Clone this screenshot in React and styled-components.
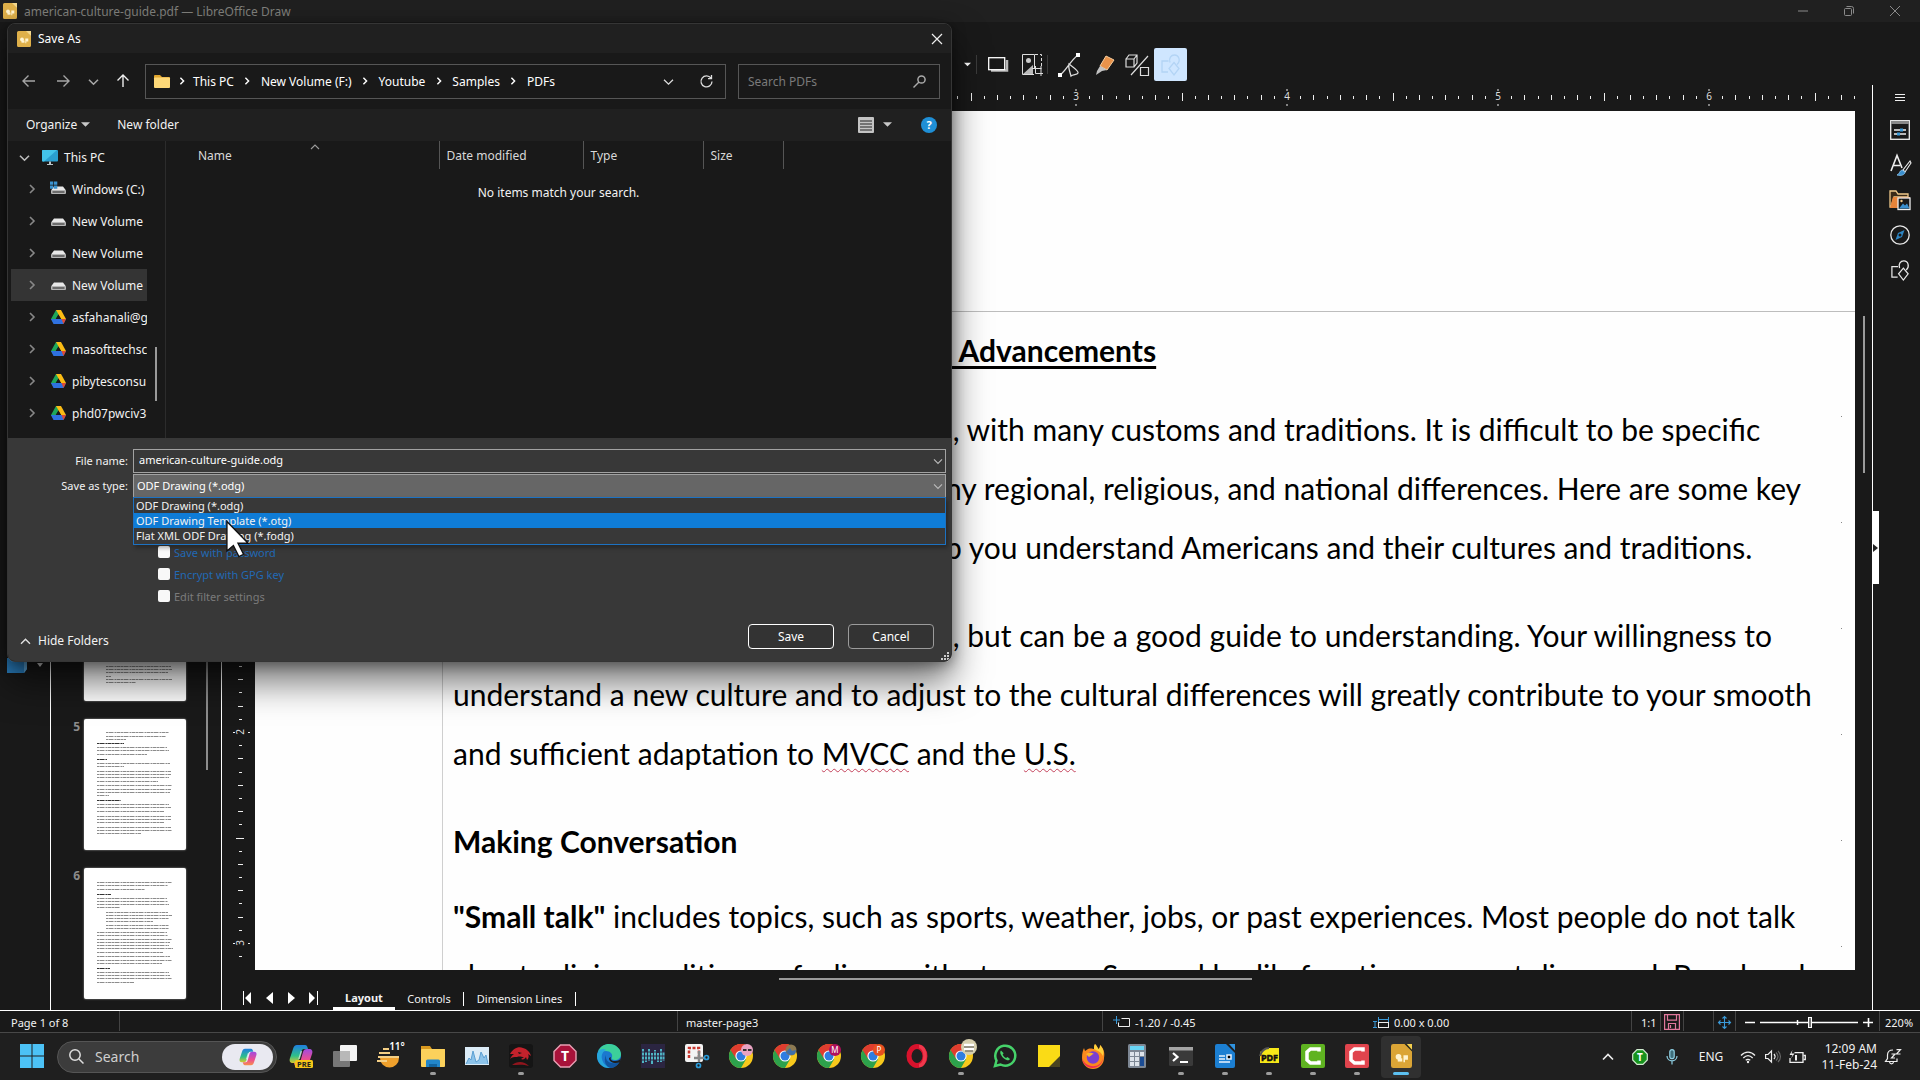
import React from "react";
import styled, { createGlobalStyle, css } from "styled-components";

const Global = createGlobalStyle`
  *, *::before, *::after { box-sizing: border-box; }
  html, body { margin: 0; padding: 0; background: #191919; overflow: hidden; }
  body { font-family: "Noto Sans", "Open Sans", sans-serif; font-size: 12px; color: #f2f2f2; }
  button, input, select { font: inherit; color: inherit; }
  button { background: none; border: 0; padding: 0; margin: 0; cursor: default; }
  svg { display: block; flex: none; overflow: visible; }
  h2, p, ul { margin: 0; padding: 0; font-weight: inherit; }
`;

/* ---------- application window ---------- */

const Desktop = styled.div`
  position: relative;
  display: flex;
  flex-direction: column;
  height: 100vh;
  overflow: hidden;
  background: #191919;
`;

const TitleBar = styled.header`
  display: flex;
  align-items: center;
  gap: 7px;
  height: 22px;
  flex: none;
  padding: 0 17px 0 3px;
  background: #202020;
  color: #7f7f7b;
`;

const WindowButtons = styled.div`
  display: flex;
  gap: 30px;
  margin-left: auto;
`;

const GlyphButton = styled.button`
  display: flex;
  align-items: center;
  justify-content: center;
  width: ${(p) => p.$w || 16}px;
  height: ${(p) => p.$h || 16}px;
  flex: none;
`;

const ToolBar = styled.div`
  display: flex;
  align-items: flex-start;
  height: 63px;
  flex: none;
  padding: 22px 0 0 959px;
`;

const ToolButton = styled.button`
  display: flex;
  align-items: center;
  justify-content: center;
  width: ${(p) => p.$w || 33}px;
  height: 33px;
  margin-top: 4px;
  border-radius: 2px;
  background: ${(p) => (p.$active ? "#cfe6ff" : "transparent")};
`;

const ToolRule = styled.span`
  width: 1px;
  height: 19px;
  margin-top: 11px;
  background: #3c3c3c;
`;

const Workspace = styled.main`
  display: flex;
  flex: 1;
  min-height: 0;
`;

const DrawTools = styled.div`
  display: flex;
  width: 50px;
  flex: none;
  gap: 8px;
  padding: 573px 0 0 7px;
  align-items: flex-start;
`;

const SlidePanel = styled.aside`
  display: flex;
  width: 172px;
  flex: none;
  padding-bottom: 2px;
  border-left: 1px solid #fff;
  border-right: 1px solid #fff;
`;

const SlideList = styled.div`
  display: flex;
  flex-direction: column;
  justify-content: flex-end;
  gap: 18px;
  width: 152px;
  padding: 0 0 9px;
`;

const Slide = styled.div`
  display: flex;
  justify-content: flex-end;
  gap: 4px;
  padding-right: 17px;
  font-weight: 700;
  line-height: 16px;
  color: #8b8b8b;
`;

const SlidePage = styled.div`
  width: 102px;
  height: 131px;
  border-radius: 2px;
  background: #fff;
  box-shadow: 0 0 2px #aaa;
`;

const SlideThumbTrack = styled.div`
  width: 2px;
  height: 185px;
  margin: 500px 0 0 3px;
  background: #8d8d8d;
`;

const Editor = styled.section`
  display: flex;
  flex-direction: column;
  flex: 1;
  min-width: 0;
`;

const EditorRow = styled.div`
  display: flex;
  flex: 1;
  min-height: 0;
`;

const HRuler = styled.svg`
  width: 100%;
  height: 26px;
`;

const VRuler = styled.svg`
  width: 33px;
  height: 100%;
`;

const Page = styled.article`
  flex: 1;
  min-width: 0;
  overflow: hidden;
  background: #fefefe;
  color: #000;
`;

const Frame = styled.div`
  height: 100%;
  margin: 200px 0 0 187px;
  padding: 9px 0 0 10px;
  border-top: 1px solid #bdbdbd;
  border-left: 1px solid #cfcfcf;
  background: linear-gradient(#888 1px, transparent 1px) right 13px top 104px / 1px 106px repeat-y;
  font-family: Lato, Carlito, sans-serif;
  font-size: 30px;
  line-height: 59px;
  white-space: pre;
`;

const Paragraph = styled.p`
  margin-bottom: ${(p) => p.$after || 0}px;
`;

const Line = styled.span`
  display: block;
  padding-left: ${(p) => (p.$covered ? 492 : 0)}px;
`;

const Heading = styled.h2`
  && {
    padding-left: ${(p) => (p.$covered ? 492 : 0)}px;
    margin-bottom: ${(p) => p.$after}px;
    font-size: 30px;
    font-weight: 700;
  }
`;

const Title = styled.span`
  text-decoration: underline;
  text-decoration-thickness: 3px;
  text-underline-offset: 4px;
  text-decoration-skip-ink: none;
`;

const Misspelt = styled.span`
  text-decoration: underline wavy #c4415a 1px;
  text-underline-offset: 3px;
`;

const ScrollColumn = styled.div`
  width: 17px;
  flex: none;
  padding: 205px 7px 0 8px;
`;

const ScrollThumb = styled.div`
  width: ${(p) => p.$w};
  height: ${(p) => p.$h};
  background: #9a9a9a;
`;

const SheetBar = styled.div`
  height: 40px;
  flex: none;
  font-size: 11px;
`;

const HScroll = styled.div`
  display: flex;
  height: 16px;
  padding: 8px 0 0 557px;
`;

const Sheets = styled.nav`
  display: flex;
  height: 24px;
  padding-left: 14px;
  align-items: stretch;
`;

const SheetNav = styled(GlyphButton)`
  width: 22px;
  height: 24px;
`;

const Sheet = styled.button`
  padding: 0 ${(p) => (p.$active ? 0 : 12)}px;
  width: ${(p) => p.$w}px;
  border-right: ${(p) => (p.$rule ? "1px solid #fff" : "0")};
  border-bottom: ${(p) => (p.$active ? "3px solid #fff" : "0")};
  font-weight: ${(p) => (p.$active ? 700 : 400)};
  line-height: 23px;
  white-space: nowrap;
  ${(p) => p.$rule && css`
    height: 14px;
    line-height: 14px;
    margin-top: 6px;
  `}
`;

const SideBar = styled.aside`
  display: flex;
  flex-direction: column;
  align-items: center;
  gap: 13px;
  width: 48px;
  flex: none;
  padding: 5px 0 0 7px;
  border-left: 1px solid #fff;
  position: relative;
`;

const SideHandle = styled.button`
  position: absolute;
  left: 0;
  top: 426px;
  width: 6px;
  height: 73px;
  display: flex;
  align-items: center;
  background: #fff;
`;

const StatusBar = styled.footer`
  display: flex;
  height: 22px;
  flex: none;
  border-top: 1px solid #fff;
  font-size: 11px;
  white-space: nowrap;
`;

const StatusCell = styled.div`
  display: flex;
  align-items: center;
  gap: 5px;
  width: ${(p) => (p.$w ? p.$w + "px" : "auto")};
  flex: ${(p) => p.$grow || "none"};
  padding: 2px 0 0 ${(p) => p.$pad || 0}px;
  border-right: ${(p) => (p.$rule ? "1px solid #444" : "0")};
  height: 20px;
`;

/* ---------- taskbar ---------- */

const TaskBar = styled.footer`
  display: flex;
  align-items: center;
  height: 48px;
  flex: none;
  padding: 0 18px 0 12px;
  border-top: 1px solid #484848;
  background: #1f1f1f;
`;

const Task = styled.button`
  display: flex;
  flex-direction: column;
  align-items: center;
  width: 40px;
  height: 42px;
  margin-right: 4px;
  padding-top: 8px;
  border-radius: 4px;
  background: ${(p) => (p.$active ? "#303030" : "transparent")};
  &::after {
    content: "";
    width: ${(p) => (p.$active ? 16 : 6)}px;
    height: 3px;
    margin-top: 4px;
    border-radius: 2px;
    background: ${(p) => (p.$active ? "#5cc0f0" : p.$open ? "#9c9c9c" : "transparent")};
  }
`;

const TaskSearch = styled.button`
  display: flex;
  align-items: center;
  gap: 11px;
  width: 220px;
  height: 32px;
  margin: 0 4px 0 1px;
  padding: 0 3px 0 11px;
  border: 1px solid #555;
  border-radius: 16px;
  background: #3c3c3c;
  color: #cfcfcf;
  font-size: 14px;
`;

const CopilotPill = styled.span`
  display: flex;
  align-items: center;
  justify-content: center;
  width: 51px;
  height: 26px;
  margin-left: auto;
  border-radius: 13px;
  background: #e9e9f1;
`;

const Tray = styled.div`
  display: flex;
  align-items: center;
  margin-left: auto;
`;

const TrayItem = styled.span`
  display: flex;
  align-items: center;
  justify-content: center;
  width: ${(p) => p.$w}px;
`;

const Clock = styled.time`
  width: 67px;
  margin-right: 7px;
  line-height: 16px;
  text-align: right;
  white-space: nowrap;
`;

/* ---------- save dialog ---------- */

const Dialog = styled.section`
  position: absolute;
  left: 7px;
  top: 23px;
  width: 945px;
  height: 639px;
  display: flex;
  flex-direction: column;
  overflow: hidden;
  border: 1px solid #353535;
  border-radius: 8px;
  background: #191919;
`;

const DialogShadow = styled.div`
  position: absolute;
  left: 7px;
  top: 23px;
  width: 945px;
  height: 639px;
  border-radius: 8px;
  box-shadow: 0 20px 36px rgba(0, 0, 0, 0.55), 0 2px 14px rgba(0, 0, 0, 0.4);
`;

const DialogTitle = styled.header`
  display: flex;
  align-items: center;
  gap: 7px;
  height: 29px;
  flex: none;
  padding: 0 6px 0 9px;
  background: #202020;
  color: #fff;
`;

const Spacer = styled.span`
  flex: 1;
`;

const NavRow = styled.div`
  display: flex;
  align-items: center;
  height: 56px;
  flex: none;
  padding: 0 11px 0 10px;
`;

const Address = styled.div`
  display: flex;
  align-items: center;
  width: 581px;
  height: 35px;
  margin: 0 12px 0 11px;
  padding: 0 11px 0 8px;
  border: 1px solid #565656;
  color: #fff;
`;

const Crumb = styled.button`
  white-space: nowrap;
`;

const CrumbGap = styled.span`
  display: flex;
  justify-content: center;
  width: ${(p) => p.$w || 27}px;
`;

const SearchBox = styled.label`
  display: flex;
  align-items: center;
  width: 202px;
  height: 35px;
  padding: 0 13px 0 9px;
  border: 1px solid #565656;
`;

const SearchInput = styled.input`
  flex: 1;
  min-width: 0;
  padding: 0;
  border: 0;
  outline: 0;
  background: none;
  &::placeholder { color: #7a7a7a; opacity: 1; }
`;

const Commands = styled.div`
  display: flex;
  align-items: center;
  height: 32px;
  flex: none;
  padding: 0 14px 1px 18px;
  background: #202020;
`;

const Command = styled.button`
  display: flex;
  align-items: center;
  gap: 4px;
  margin-right: 27px;
`;

const ViewButton = styled.button`
  display: flex;
  align-items: center;
  gap: 9px;
  margin-right: 29px;
`;

const Browser = styled.div`
  display: flex;
  height: 297px;
  flex: none;
`;

const Tree = styled.div`
  width: 139px;
  overflow: hidden;
  padding-left: 3px;
`;

const TreeRow = styled.button`
  display: flex;
  align-items: center;
  gap: 6px;
  width: 136px;
  height: 32px;
  padding-left: ${(p) => (p.$root ? 7 : 16)}px;
  overflow: hidden;
  white-space: nowrap;
  background: ${(p) => (p.$selected ? "#343434" : "transparent")};
`;

const TreeArrow = styled.span`
  display: flex;
  align-items: center;
  justify-content: center;
  width: ${(p) => (p.$root ? 12 : 10)}px;
  margin-right: ${(p) => (p.$root ? 6 : 8)}px;
  flex: none;
`;

const TreeScroll = styled.div`
  width: 19px;
  padding: 206px 9px 0 8px;
  border-right: 1px solid #2c2c2c;
`;

const Files = styled.div`
  flex: 1;
`;

const FileTable = styled.table`
  border-collapse: collapse;
  table-layout: fixed;
  width: 617px;
  color: #d8d8d8;
  th {
    height: 28px;
    padding: 1px 0 0 7px;
    border-right: 1px solid #555;
    font-weight: 400;
    text-align: left;
  }
  th:first-child { padding-left: 32px; }
`;

const NameHead = styled.span`
  display: flex;
  align-items: center;
  gap: 79px;
  svg { align-self: flex-start; margin-top: -4px; }
`;

const Empty = styled.p`
  && { padding-top: 16px; }
  line-height: 16px;
  text-align: center;
`;

const Form = styled.form`
  display: flex;
  flex-direction: column;
  flex: 1;
  padding: 10px 5px 12px 12px;
  background: #383838;
`;

const Fields = styled.div`
  font-size: 11px;
`;

const Field = styled.div`
  display: flex;
  align-items: center;
  height: 25px;
  position: relative;
`;

const FieldLabel = styled.label`
  width: 108px;
  flex: none;
  text-align: right;
`;

const fieldBox = css`
  flex: 1;
  min-width: 0;
  height: 24px;
  margin-left: 5px;
  border: 1px solid #a2a2a2;
  border-radius: 0;
  outline: 0;
  color: #fff;
`;

const NameInput = styled.input`
  ${fieldBox}
  padding: 0 24px 2px 5px;
  background: #383838;
`;

const TypeSelect = styled.select`
  ${fieldBox}
  appearance: none;
  padding: 0 24px 0 3px;
  background: #666;
`;

const FieldArrow = styled.span`
  position: absolute;
  right: 4px;
  top: 9px;
`;

const TypeList = styled.ul`
  position: absolute;
  z-index: 2;
  left: 113px;
  right: 0;
  top: 24px;
  padding-bottom: 1px;
  border: 1px solid #1d72c2;
  background: #383838;
  box-shadow: 2px 3px 4px rgba(0, 0, 0, 0.3);
  list-style: none;
`;

const TypeItem = styled.li`
  height: 15px;
  padding-left: 2px;
  line-height: 15px;
  color: #f2f2f2;
  background: ${(p) => (p.$hot ? "#0f7cd6" : "transparent")};
`;

const Checks = styled.div`
  display: flex;
  flex-direction: column;
  padding: 43px 0 0 138px;
`;

const Check = styled.label`
  display: flex;
  align-items: center;
  gap: 4px;
  height: 22px;
  color: ${(p) => (p.$muted ? "#7b7b7b" : "#2269b4")};
`;

const Box = styled.input`
  appearance: none;
  width: 12px;
  height: 12px;
  margin: 0;
  border-radius: 2px;
  background: #f8f8f8;
`;

const FormFoot = styled.div`
  display: flex;
  align-items: flex-end;
  margin-top: auto;
  padding: 0 12px 0 1px;
`;

const HideFolders = styled.button`
  display: flex;
  align-items: center;
  gap: 8px;
  margin-right: auto;
  line-height: 16px;
`;

const PushButton = styled.button`
  width: 86px;
  height: 25px;
  margin-left: 14px;
  border: 1px solid ${(p) => (p.$main ? "#fff" : "#9b9b9b")};
  border-radius: 4px;
  background: #333;
  color: #fff;
`;

const Grip = styled.span`
  position: absolute;
  right: 2px;
  bottom: 1px;
`;

const Pointer = styled.span`
  position: absolute;
  z-index: 3;
  left: 226px;
  top: 520px;
`;

/* ---------- drawings ---------- */

const Chevron = ({ dir = "right", s = 8, c = "#ddd", w = 1.4 }) => {
  const d = { right: "M3 1l4 4-4 4", down: "M0 3l5 5 5-5", up: "M0 7.500l5-5 5 5" }[dir];
  return (
    <svg width={s} height={s} viewBox="0 0 10 10" fill="none" stroke={c} strokeWidth={w}>
      <path d={d} />
    </svg>
  );
};

const DrawDoc = ({ w = 14, h = 16, dark }) => (
  <svg width={w} height={h} viewBox="0 0 14 16">
    <path d="M1.500 0H10l4 4.500V14.500a1.500 1.500 0 0 1-1.500 1.500h-11A1.500 1.500 0 0 1 0 14.500v-13A1.500 1.500 0 0 1 1.500 0z" fill={dark ? "#dba536" : "#dfb04a"} />
    <path d="M9 0h5v5z" fill={dark ? "#2a2a1c" : "#f4d88d"} />
    {dark && <path d="M10.500 0H14v3.800z" fill="#f5d04e" />}
    <circle cx="5" cy="8.500" r="1.900" fill="#fff4d0" />
    <rect x="4.500" y="9.500" width="3" height="2.200" fill="#fff4d0" />
    <path d="M8.300 7.500h3v3h-2v1.700h-1z" fill="#fff4d0" />
  </svg>
);

const Arrow = ({ dir, c }) => (
  <svg width="14" height="14" viewBox="0 0 14 14" fill="none" stroke={c} strokeWidth="1.400">
    <g transform={dir === "right" ? "rotate(180 7 7)" : dir === "up" ? "rotate(90 7 7)" : undefined}>
      <path d="M1 7h12M6.500 1.500L1 7l5.500 5.500" />
    </g>
  </svg>
);

const Caret = ({ w = 9, c = "#c8c8c8" }) => (
  <svg width={w} height="5" viewBox="0 0 10 5"><path d="M0 0h10L5 5z" fill={c} /></svg>
);

const Folder = () => (
  <svg width="16" height="13" viewBox="0 0 16 13">
    <path d="M0 1a1 1 0 0 1 1-1h5l2 2h7a1 1 0 0 1 1 1v3H0z" fill="#e0a52e" />
    <rect y="2.500" width="16" height="10.500" rx="1" fill="#fdd878" />
  </svg>
);

const Monitor = () => (
  <svg width="16" height="15" viewBox="0 0 16 15">
    <rect width="16" height="11.500" rx="1" fill="#2a9fd0" />
    <path d="M0 1a1 1 0 0 1 1-1h14L2 11.500H1a1 1 0 0 1-1-1z" fill="#43c4ea" />
    <path d="M7 11.500h2V14h2v1H5v-1h2z" fill="#b9c4c9" />
  </svg>
);

const Drive = ({ win }) => (
  <svg width="15" height="14" viewBox="0 0 15 14">
    <path d="M3 4.500h9L15 8.500H0z" fill="#e8e8e8" />
    <rect y="8" width="15" height="4" rx="1" fill="#b5b5b5" />
    <rect x="1.500" y="9.300" width="12" height="1.400" fill="#4c4c4c" />
    {win && <path d="M-1-.5h3.300v3.300H-1zM3-.5h3.300v3.300H3zM-1 3.500h3.300v3.300H-1zM3 3.500h3.300v3.300H3z" fill="#3b93cf" />}
  </svg>
);

const GDrive = () => (
  <svg width="15" height="14" viewBox="0 0 15 14">
    <path d="M5 0h5L5 8.500 2.500 13 0 9z" fill="#1ea75a" />
    <path d="M5 0h5l5 9h-5z" fill="#fbbc14" />
    <path d="M2.500 9h10L15 9l-2.500 5h-10L0 9z" fill="#2f71e0" />
    <path d="M10.500 9H15l-2.500 5z" fill="#e04a34" />
    <path d="M7.500 4.700L10 9H5z" fill="#191919" />
  </svg>
);

const ShapesIcon = ({ c = "#e8e8e8", s = 22 }) => (
  <svg width={s} height={s} viewBox="0 0 20 22" fill="none" stroke={c} strokeWidth="1.300">
    <path d="M7.500 7H1v11h6" />
    <path d="M9 8.500C7.500 4 10 1 13.500 1 18 1 20 7 16 10.500" />
    <path d="M13 8.500l5 6-5 6.500-5-6.500z" />
  </svg>
);

const Chrome = ({ children }) => (
  <svg width="24" height="24" viewBox="0 0 24 24">
    <circle cx="12" cy="12" r="12" fill="#f8c91c" />
    <path d="M12 12L1.600 6A12 12 0 0 1 22.400 6z" fill="#df3d2f" />
    <path d="M1.600 6A12 12 0 0 0 12 24l5.200-9L12 12z" fill="#2da24c" />
    <path d="M12 6.500h10.700A12 12 0 0 0 1.600 6l5.600 9z" fill="#df3d2f" />
    <circle cx="12" cy="12" r="5.600" fill="#fff" />
    <circle cx="12" cy="12" r="4.500" fill="#2f7de1" />
    {children}
  </svg>
);

const Badge = ({ fill, letter }) => (
  <>
    <circle cx="18" cy="6" r="6" fill={fill} />
    <text x="18" y="9" fontSize="8" fill="#fff" textAnchor="middle">{letter}</text>
  </>
);

const CopilotArt = ({ s = 22, pre }) => (
  <svg width={s} height={s} viewBox="0 0 24 24">
    <defs>
      <linearGradient id="cpA" x1="0" y1="0" x2="0" y2="1">
        <stop offset="0" stopColor="#1f7fe0" /><stop offset=".6" stopColor="#2fc089" /><stop offset="1" stopColor="#d7c92f" />
      </linearGradient>
      <linearGradient id="cpB" x1="0" y1="0" x2="0" y2="1">
        <stop offset="0" stopColor="#a04be0" /><stop offset=".6" stopColor="#ee4f8e" /><stop offset="1" stopColor="#f6904c" />
      </linearGradient>
    </defs>
    <path d="M8 1h8c2 0 2.500 2 3 4h-4c-2 0-2.500 2-3 4l-2 7c-.6 2-1.500 3-4 3H4c-3 0-4-2-3-5L4 5c.7-2.500 2-4 4-4z" fill="url(#cpA)" />
    <path d="M16 23H8c-2 0-2.500-2-3-4h4c2 0 2.500-2 3-4l2-7c.6-2 1.500-3 4-3h2c3 0 4 2 3 5l-3 9c-.7 2.500-2 4-4 4z" fill="url(#cpB)" />
    <path d="M10 15l2.500-8" stroke="#fff" strokeWidth="1.500" opacity=".6" />
    {pre && (
      <g>
        <rect x="6" y="16" width="18" height="8" rx="1.500" fill="#f5c518" />
        <text x="15" y="22.800" fontSize="7.500" fontWeight="700" fill="#222" textAnchor="middle">PRE</text>
      </g>
    )}
  </svg>
);

const Icon24 = ({ children }) => <svg width="24" height="24" viewBox="0 0 24 24">{children}</svg>;

const tasks = [
  { name: "Copilot preview", art: <CopilotArt s={24} pre /> },
  { name: "Task view", art: (
    <Icon24><rect x="7" y="1" width="17" height="16" rx="1" fill="#f4f4f4" /><rect x="0" y="7" width="17" height="16" rx="1" fill="#777" /><rect x="7" y="7" width="10" height="10" fill="#b8b8b8" /></Icon24>
  ) },
  { name: "Weather", art: (
    <Icon24>
      <path d="M3 14h19a9 9 0 0 1-19 0z" fill="#efa02c" />
      <path d="M6 5h6M2 9h11M1 13h21M0 17h10" stroke="#f4cf85" strokeWidth="2" />
      <text x="20" y="6" fontSize="10" fontWeight="600" fill="#fff" textAnchor="middle">11°</text>
    </Icon24>
  ) },
  { name: "File Explorer", open: true, art: (
    <Icon24><path d="M0 2h9l2 3h13v6H0z" fill="#d9991f" /><rect y="5" width="24" height="18" rx="1" fill="#fbd15b" /><path d="M5 23v-6a1.500 1.500 0 0 1 1.500-1.500h11A1.500 1.500 0 0 1 19 17v6z" fill="#2286c9" /><path d="M8 23v-3h8v3z" fill="#12649e" /></Icon24>
  ) },
  { name: "Performance", art: (
    <Icon24><rect y="3" width="24" height="18" fill="#dcecf7" /><path d="M1 20l3-6 2 2 2-9 3 11 3-2 2-8 3 6 2-3 2 9z" fill="#8cc3ea" /><path d="M1 20l3-6 2 2 2-9 3 11 3-2 2-8 3 6 2-3 2 9" fill="none" stroke="#5b9fd2" /></Icon24>
  ) },
  { name: "Dragon Center", open: true, art: (
    <Icon24><rect width="24" height="24" rx="3" fill="#151515" /><path d="M1 10C4 5 9 2 14 4c4 1 7 4 8 8l-3-2c1 2 1 4-1 6l-1-3c-1 2-3 3-5 2l3-2c-3 0-4-1-7 0-3 0-5 0-7 2 1-2 2-4 4-5z" fill="#c4222c" /><path d="M3 21c5-4 12-4 17 1-6-2-12-1-17-1z" fill="#8f151d" /><path d="M9 8l4 1-3 1z" fill="#151515" /></Icon24>
  ) },
  { name: "Text tool", art: (
    <Icon24><path d="M7.500 1h9L23 7.500v9L16.500 23h-9L1 16.500v-9z" fill="#a8123a" stroke="#e8a0b4" strokeWidth="1.400" /><text x="12" y="17" fontSize="14" fontWeight="700" fill="#fff" textAnchor="middle">T</text></Icon24>
  ) },
  { name: "Edge", art: (
    <Icon24>
      <circle cx="12" cy="12" r="12" fill="#1b78cf" />
      <path d="M1 8C3 2 8 0 12 0c7 0 12 5 12 10 0 4-3 6-6 6-3 0-4-1-3-3 1-3-2-6-6-6-4 0-7 2-8 1z" fill="#3ccf9a" />
      <path d="M0 12c0-5 5-9 9-6-3 1-5 5-4 9 1 5 5 8 9 9C6 25 0 19 0 12z" fill="#27a6dc" />
      <path d="M9 11c-1 6 4 9 10 8 2 0 3-1 3.500-1.500-1 3-4 6-8.500 6.500-5-1-8-7-5-13z" fill="#10549e" />
      <path d="M14 13c-1 2 0 4 4 4 3 0 5-1 6-3l-1 4c-4 2-11 1-11-4z" fill="#1f1f1f" />
    </Icon24>
  ) },
  { name: "Audio editor", art: (
    <Icon24><rect width="24" height="24" fill="#2b2541" /><path d="M2 5v14M5 8v10M8 5v12M11 9v11M14 6v10M17 9v9M20 5v13M22.500 8v9" stroke="#4fb4c4" strokeWidth="2" /><path d="M0 12h24M0 8h24M0 16h24" stroke="#2b2541" /></Icon24>
  ) },
  { name: "Snipping Tool", art: (
    <Icon24><rect x="0" y="0" width="18" height="18" rx="2" fill="#f4f4f4" /><path d="M4 14V4h10v10" fill="none" stroke="#c8372f" strokeWidth="2.500" strokeDasharray="3 1.500" /><path d="M14 7v11M9 14h10" stroke="#888" strokeWidth="2.500" /><circle cx="13.500" cy="21.500" r="2" fill="none" stroke="#2b9ad8" strokeWidth="1.700" /><circle cx="21.500" cy="13.500" r="2" fill="none" stroke="#2b9ad8" strokeWidth="1.700" /></Icon24>
  ) },
  { name: "Chrome profile 1", art: <Chrome><circle cx="18" cy="6" r="6" fill="#e9a3c2" /><path d="M14 5h3.500v2H14zM19 5h3.500v2H19z" fill="#333" /></Chrome> },
  { name: "Chrome profile 2", art: <Chrome><circle cx="18" cy="6" r="5.500" fill="#8d7a52" /><path d="M13 8l4-4 2 3 4-1-1 4c-3 2-7 1-9-2z" fill="#3f6fa8" /></Chrome> },
  { name: "Chrome profile M", art: <Chrome><Badge fill="#b0105c" letter="M" /></Chrome> },
  { name: "Chrome profile P", art: <Chrome><Badge fill="#e8501f" letter="P" /></Chrome> },
  { name: "Opera", art: (
    <Icon24><ellipse cx="12" cy="12" rx="8" ry="9.500" fill="none" stroke="#d8122c" strokeWidth="5" /><path d="M14 2.500c8 0 8 19 0 19" fill="none" stroke="#f0384c" strokeWidth="3.500" /></Icon24>
  ) },
  { name: "Chrome profile 3", open: true, art: <Chrome><circle cx="20" cy="3" r="8" fill="#d6cfae" /><path d="M15 1h10M15 5h10" stroke="#fff" strokeWidth="2.500" /><path d="M15 3h10M16 7h8" stroke="#55514a" /></Chrome> },
  { name: "WhatsApp", art: (
    <Icon24><path d="M2 22l1.500-5.500a10 10 0 1 1 4 4z" fill="#1f1f1f" stroke="#46d26a" strokeWidth="2.500" /><path d="M8 6.500c-2 2 .5 6 3 8s5 2.500 6 .5l-2.500-2-1.500 1c-2-1-3-2.500-3.300-3.800l1-1z" fill="#46d26a" /></Icon24>
  ) },
  { name: "Sticky Notes", art: <Icon24><path d="M1 1h22v22H1z" fill="#fadb16" /><path d="M23 12v11H12z" fill="#4a4420" /></Icon24> },
  { name: "Firefox", art: (
    <Icon24>
      <path d="M14 0c2 2 3 4 3 5 2 0 2-3 2-4 4 4 5 8 4 13a11 11 0 0 1-22 0C1 9 2 6 3 4l1 3 3-2c3-1 5 0 6 0 0-2 0-3 1-5z" fill="#fb8a1e" />
      <path d="M14 0c2 2 3 4 3 5 2 0 2-3 2-4 4 4 4 8 3 11-2-4-5-5-9-7 0-2 0-3 1-5z" fill="#fdd23c" />
      <path d="M1 13c1 10 18 14 21 1-1 13-20 14-21-1z" fill="#ef2b55" />
      <circle cx="12" cy="13.500" r="6.200" fill="#7a3fd0" />
      <path d="M5 10c3-2 6-1 8 0-2 0-3 2-5 3z" fill="#fdb52a" />
    </Icon24>
  ) },
  { name: "Calculator", art: (
    <Icon24><rect x="3" y="0" width="18" height="24" rx="1.500" fill="#7d8794" /><rect x="5" y="2" width="14" height="4" fill="#68d5f5" /><path d="M5 8h4v4H5zM10 8h4v4h-4zM15 8h4v4h-4zM5 13h4v4H5zM10 13h4v4h-4zM5 18h4v4H5zM10 18h4v4h-4z" fill="#dde3ea" /><rect x="15" y="13" width="4" height="9" fill="#1b4c94" /></Icon24>
  ) },
  { name: "Terminal", open: true, art: <Icon24><rect y="3" width="24" height="19" rx="1.500" fill="#3a3a3a" /><rect y="3" width="24" height="3.500" fill="#a4a4a4" /><path d="M4 9l4.500 4L4 17M11 18h8" fill="none" stroke="#fff" strokeWidth="2.200" /></Icon24> },
  { name: "LibreOffice Writer", open: true, art: <Icon24><path d="M2 2a2 2 0 0 1 2-2h10l8 8v14a2 2 0 0 1-2 2H4a2 2 0 0 1-2-2z" fill="#1c7fd2" /><path d="M13 0h9v9z" fill="#1f1f1f" /><path d="M16 0h6v6.500z" fill="#2f93e0" /><path d="M6 12h6M6 15h6M6 18h11M14 11h4v4h-4z" stroke="#e8f4ff" strokeWidth="1.500" /></Icon24> },
  { name: "PDF viewer", open: true, art: <Icon24><path d="M3 8l6-4h13v15H3z" fill="#f7e818" /><path d="M3 12C4 7 8 4 12 4" stroke="#555" strokeWidth="2" fill="none" /><text x="12.500" y="17" fontSize="9" fontWeight="700" fill="#111" stroke="#111" strokeWidth=".5" textAnchor="middle">PDF</text></Icon24> },
  { name: "Camtasia", open: true, art: <Icon24><rect width="24" height="24" rx="2" fill="#5fb321" /><path d="M18 7.500V5H9.500L6 8v8l3.500 3H18v-2.500" fill="none" stroke="#fff" strokeWidth="3.500" /></Icon24> },
  { name: "Camtasia Recorder", open: true, art: <Icon24><rect width="24" height="24" rx="2" fill="#e0444d" /><path d="M18 7.500V5H9.500L6 8v8l3.500 3H18v-2.500" fill="none" stroke="#fff" strokeWidth="3.500" /></Icon24> },
  { name: "LibreOffice Draw", active: true, art: <DrawDoc w={21} h={24} dark /> },
];

/* Sixteenths of an inch, drawn from a labelled whole inch. */
const PITCH = 211;
const ticks = (first, from, to, origin) => {
  const out = [];
  for (let i = -80; i < 90; i++) {
    const at = origin + (i * PITCH) / 16;
    if (at < from || at > to) continue;
    const inch = i % 16 === 0;
    out.push({ at: Math.round(at), inch, label: first + i / 16, len: i % 8 === 0 ? 8 : i % 2 === 0 ? 5 : 3 });
  }
  return out;
};

const TopRuler = () => (
  <HRuler>
    {ticks(3, 729, 1633, 854).map((t) =>
      t.inch ? (
        <g key={t.at}>
          <path d={`M${t.at} 4v2M${t.at} 19v2`} stroke="#eee" />
          <text x={t.at} y="15" fontSize="10" fill="#ddd" textAnchor="middle">{t.label}</text>
        </g>
      ) : (
        <path key={t.at} d={`M${t.at}.5 ${12 - Math.floor(t.len / 2)}v${t.len}`} stroke="#eee" />
      )
    )}
  </HRuler>
);

const SideRuler = () => (
  <VRuler>
    {ticks(2, 540, 849, 621).map((t) =>
      t.inch ? (
        <g key={t.at}>
          <path d={`M11 ${t.at}.5h2M26 ${t.at}.5h2`} stroke="#eee" />
          <text transform={`translate(22 ${t.at}) rotate(-90)`} fontSize="10" fill="#ddd" textAnchor="middle">{t.label}</text>
        </g>
      ) : (
        <path key={t.at} d={`M${18 - Math.floor(t.len / 2)} ${t.at}.5h${t.len}`} stroke="#eee" />
      )
    )}
  </VRuler>
);

/* Each entry is [y, left, width, bold] of one line of miniature text. */
const five = [
  [13, 22, 63], [17, 22, 60], [20, 22, 20], [24, 13, 27, 1], [28, 13, 70], [31, 13, 72], [35, 13, 50], [40, 13, 10, 1],
  [44, 13, 73], [47, 13, 27], [52, 13, 74], [55, 13, 74], [58, 13, 72], [62, 13, 61], [66, 13, 75], [70, 13, 74], [73, 13, 73], [76, 13, 12],
  [81, 13, 24, 1], [85, 13, 72], [88, 13, 74], [92, 13, 67], [97, 13, 74], [100, 13, 74], [103, 13, 67], [108, 13, 74], [111, 13, 75], [114, 13, 44],
];
const six = [
  [14, 13, 75], [17, 13, 71], [21, 13, 48], [26, 13, 14, 1], [30, 13, 70], [33, 13, 71], [36, 13, 72], [39, 13, 23],
  [44, 22, 62], [47, 22, 66], [50, 22, 63], [53, 22, 47], [57, 22, 63], [60, 22, 63], [64, 13, 70], [67, 13, 71], [71, 13, 75], [74, 13, 73],
  [77, 13, 72], [80, 13, 76], [84, 13, 66], [88, 13, 73], [92, 13, 75], [95, 13, 65], [100, 13, 13, 1], [104, 13, 72], [107, 13, 73], [110, 13, 75], [114, 13, 37],
];
const four = [[96, 22, 65], [99, 22, 66], [102, 22, 62], [106, 22, 5], [109, 22, 66], [112, 22, 30]];

const Mini = ({ rows }) => (
  <svg width="102" height="131">
    {rows.map(([y, x, w, b]) => (
      <g key={y}>
        <path d={`M${x} ${y}.500h${w}`} stroke={b ? "#888" : "#c4c4c4"} />
        <path d={`M${x} ${y}.500h${w}`} stroke={b ? "#333" : "#8c8c8c"} strokeDasharray="2 1 4 2 1 1 3 1" />
      </g>
    ))}
  </svg>
);

const slides = [[4, four], [5, five], [6, six]];

const drives = [
  ["c", "Windows (C:)", <Drive win />],
  ["d", "New Volume", <Drive />],
  ["e", "New Volume", <Drive />],
  ["f", "New Volume", <Drive />, true],
  ["g1", "asfahanali@g", <GDrive />],
  ["g2", "masofttechsc", <GDrive />],
  ["g3", "pibytesconsu", <GDrive />],
  ["g4", "phd07pwciv3", <GDrive />],
];

const SaveDialog = () => (
  <>
    <DialogShadow />
    <Dialog role="dialog" aria-label="Save As">
      <DialogTitle>
        <DrawDoc />
        <span>Save As</span>
        <Spacer />
        <GlyphButton aria-label="Close">
          <svg width="10" height="10" viewBox="0 0 10 10" stroke="#eee" strokeWidth="1.200"><path d="M0 0l10 10M10 0L0 10" /></svg>
        </GlyphButton>
      </DialogTitle>
      <NavRow>
        <GlyphButton $w={22} aria-label="Back"><Arrow dir="left" c="#a5a5a5" /></GlyphButton>
        <Spacer />
        <GlyphButton $w={22} aria-label="Forward"><Arrow dir="right" c="#a5a5a5" /></GlyphButton>
        <Spacer />
        <GlyphButton $w={14} aria-label="Recent"><Chevron dir="down" s={9} c="#a5a5a5" w={1.8} /></GlyphButton>
        <Spacer />
        <GlyphButton $w={22} aria-label="Up"><Arrow dir="up" c="#eee" /></GlyphButton>
        <Address>
          <Folder />
          <CrumbGap $w={23}><Chevron w={1.8} c="#fff" /></CrumbGap>
          <Crumb>This PC</Crumb><CrumbGap><Chevron w={1.8} c="#fff" /></CrumbGap>
          <Crumb>New Volume (F:)</Crumb><CrumbGap><Chevron w={1.8} c="#fff" /></CrumbGap>
          <Crumb>Youtube</Crumb><CrumbGap><Chevron w={1.8} c="#fff" /></CrumbGap>
          <Crumb>Samples</Crumb><CrumbGap><Chevron w={1.8} c="#fff" /></CrumbGap>
          <Crumb>PDFs</Crumb>
          <Spacer />
          <GlyphButton aria-label="History"><Chevron dir="down" s={9} /></GlyphButton>
          <CrumbGap $w={22} />
          <GlyphButton aria-label="Refresh">
            <svg width="13" height="13" viewBox="0 0 13 13" fill="none" stroke="#ddd" strokeWidth="1.300"><path d="M11 3.200A5.500 5.500 0 1 0 12 6.500M11.500 0v3.700H8" /></svg>
          </GlyphButton>
        </Address>
        <SearchBox>
          <SearchInput placeholder="Search PDFs" aria-label="Search PDFs" />
          <svg width="13" height="13" viewBox="0 0 13 13" fill="none" stroke="#aaa" strokeWidth="1.500"><circle cx="8.500" cy="4.500" r="3.600" /><path d="M6 7l-5.500 5.500" /></svg>
        </SearchBox>
      </NavRow>
      <Commands>
        <Command>Organize <Caret w={9} /></Command>
        <Command>New folder</Command>
        <Spacer />
        <ViewButton aria-label="Change view">
          <svg width="16" height="16" viewBox="0 0 16 16"><rect width="16" height="16" rx="1" fill="#c4c4c4" /><path d="M2 4h12M2 7h12M2 10h12M2 13h12" stroke="#222" strokeWidth="1.200" /></svg>
          <Caret w={9} />
        </ViewButton>
        <GlyphButton aria-label="Help">
          <svg width="16" height="16" viewBox="0 0 16 16"><circle cx="8" cy="8" r="8" fill="#1f8fd6" /><text x="8" y="12" fontSize="11" fontWeight="700" fill="#fff" textAnchor="middle">?</text></svg>
        </GlyphButton>
      </Commands>
      <Browser>
        <Tree>
          <TreeRow $root>
            <TreeArrow $root><Chevron dir="down" s={9} c="#bbb" w={1.8} /></TreeArrow>
            <Monitor />
            This PC
          </TreeRow>
          {drives.map(([key, name, art, on]) => (
            <TreeRow key={key} $selected={on}>
              <TreeArrow><Chevron s={10} c="#888" w={1.6} /></TreeArrow>
              {art}
              {name}
            </TreeRow>
          ))}
        </Tree>
        <TreeScroll><ScrollThumb $w="2px" $h="54px" /></TreeScroll>
        <Files>
          <FileTable>
            <colgroup><col width="273" /><col width="144" /><col width="120" /><col width="80" /></colgroup>
            <thead>
              <tr>
                <th><NameHead>Name <Chevron dir="up" s={8} c="#999" /></NameHead></th>
                <th>Date modified</th>
                <th>Type</th>
                <th>Size</th>
              </tr>
            </thead>
          </FileTable>
          <Empty>No items match your search.</Empty>
        </Files>
      </Browser>
      <Form onSubmit={(e) => e.preventDefault()}>
        <Fields>
          <Field>
            <FieldLabel htmlFor="file-name">File name:</FieldLabel>
            <NameInput id="file-name" defaultValue="american-culture-guide.odg" />
            <FieldArrow><Chevron dir="down" s={8} c="#bbb" /></FieldArrow>
          </Field>
          <Field>
            <FieldLabel htmlFor="file-type">Save as type:</FieldLabel>
            <TypeSelect id="file-type" defaultValue="odg">
              <option value="odg">ODF Drawing (*.odg)</option>
              <option value="otg">ODF Drawing Template (*.otg)</option>
              <option value="fodg">Flat XML ODF Drawing (*.fodg)</option>
            </TypeSelect>
            <FieldArrow><Chevron dir="down" s={8} c="#bbb" /></FieldArrow>
            <TypeList role="listbox" aria-label="Save as type">
              <TypeItem role="option">ODF Drawing (*.odg)</TypeItem>
              <TypeItem role="option" $hot>ODF Drawing Template (*.otg)</TypeItem>
              <TypeItem role="option">Flat XML ODF Drawing (*.fodg)</TypeItem>
            </TypeList>
          </Field>
          <Checks>
            <Check><Box type="checkbox" />Save with password</Check>
            <Check><Box type="checkbox" />Encrypt with GPG key</Check>
            <Check $muted><Box type="checkbox" />Edit filter settings</Check>
          </Checks>
        </Fields>
        <FormFoot>
          <HideFolders type="button"><Chevron dir="up" s={9} w={1.6} />Hide Folders</HideFolders>
          <PushButton type="submit" $main>Save</PushButton>
          <PushButton type="button">Cancel</PushButton>
        </FormFoot>
      </Form>
      <Grip><svg width="8" height="8" fill="#ccc"><path d="M6 0h2v2H6zM3 3h2v2H3zM6 3h2v2H6zM0 6h2v2H0zM3 6h2v2H3zM6 6h2v2H6z" /></svg></Grip>
    </Dialog>
  </>
);

export default function App() {
  return (
    <>
      <Global />
      <Desktop>
        <TitleBar>
          <DrawDoc />
          <span>american-culture-guide.pdf — LibreOffice Draw</span>
          <WindowButtons>
            <GlyphButton aria-label="Minimize"><svg width="10" height="2"><path d="M0 1h10" stroke="#8a8a8a" /></svg></GlyphButton>
            <GlyphButton aria-label="Restore"><svg width="10" height="10" fill="none" stroke="#8a8a8a"><rect x=".5" y="2.500" width="7" height="7" rx="1" /><path d="M2.500.5h5a2 2 0 0 1 2 2v5" /></svg></GlyphButton>
            <GlyphButton aria-label="Close window"><svg width="10" height="10" stroke="#8a8a8a"><path d="M0 0l10 10M10 0L0 10" /></svg></GlyphButton>
          </WindowButtons>
        </TitleBar>

        <ToolBar>
          <ToolButton $w={17} aria-label="More"><Caret w={7} c="#fff" /></ToolButton>
          <ToolRule />
          <ToolButton $w={41} aria-label="Shadow">
            <svg width="20" height="16" viewBox="0 0 20 16"><path d="M3 13.500h16V3" stroke="#bbb" strokeWidth="2.500" fill="none" /><rect x=".7" y=".7" width="16" height="12" fill="#191919" stroke="#fff" strokeWidth="1.300" /></svg>
          </ToolButton>
          <ToolButton $w={29} aria-label="Crop image">
            <svg width="21" height="22" viewBox="0 0 21 22" fill="none" stroke="#ddd">
              <path d="M12 20.500H.5V.5h12v14" /><path d="M13 .5h6.500V13" strokeDasharray="3 2" />
              <path d="M1 20l10-9v9z" fill="#bbb" stroke="none" /><circle cx="6.500" cy="6.500" r="2.500" fill="#ccc" stroke="none" />
              <path d="M10 14.500h9.500M13.500 12v7.500H21M19 12v10" />
            </svg>
          </ToolButton>
          <ToolRule />
          <ToolButton $w={42} aria-label="Edit points">
            <svg width="22" height="24" viewBox="0 0 22 24" fill="none" stroke="#ddd" strokeWidth="1.300">
              <path d="M2 22C8 18 12 8 20 2M11 11c5 4 10 7 9 9-1 2-5 1-7 3-1-4-3-8-2-12z" /><path d="M0 20h4v4H0zM18 0h4v4h-4z" fill="#fff" stroke="none" />
            </svg>
          </ToolButton>
          <ToolButton $w={30} aria-label="Glue points">
            <svg width="20" height="20" viewBox="0 0 20 20"><path d="M11 1l8 4-7 10-7-4z" fill="#e8924a" stroke="#f6cd9e" /><path d="M5 11l7 4-5 1-6 4 1-4z" fill="#c2c2c2" /></svg>
          </ToolButton>
          <ToolButton $w={34} aria-label="Toggle extrusion">
            <svg width="25" height="22" viewBox="0 0 25 22" fill="none" stroke="#ddd" strokeWidth="1.200">
              <path d="M1 5h8v8H1zM1 5l3-4h8v8l-3 4M9 5l3-4M23 2L6 21M15.500 13.500h8v8h-8z" />
            </svg>
          </ToolButton>
          <ToolButton $active aria-label="Show draw functions"><ShapesIcon c="#b3d4f5" s={22} /></ToolButton>
        </ToolBar>

        <Workspace>
          <DrawTools>
            <svg width="20" height="15" viewBox="0 0 20 15"><path d="M0 0h20v11l-3 4H0z" fill="#2a7fc0" /><path d="M17 4l3-4v11l-3 4z" fill="#5fa9dd" /></svg>
            <svg width="10" height="15" viewBox="0 0 10 15"><path d="M2 5h6L5 9z" fill="#ddd" /></svg>
          </DrawTools>
          <SlidePanel>
            <SlideList>
              {slides.map(([n, rows]) => (
                <Slide key={n}>
                  <span>{n}</span>
                  <SlidePage><Mini rows={rows} /></SlidePage>
                </Slide>
              ))}
            </SlideList>
            <SlideThumbTrack />
          </SlidePanel>
          <Editor>
            <TopRuler />
            <EditorRow>
              <SideRuler />
              <Page>
                <Frame>
                  <Heading $covered $after={20}><Title>{"  Advancements"}</Title></Heading>
                  <Paragraph $after={29}>
                    <Line $covered>{" , with many customs and traditions. It is difficult to be specific"}</Line>
                    <Line $covered>ny regional, religious, and national differences. Here are some key</Line>
                    <Line $covered>p you understand Americans and their cultures and traditions.</Line>
                  </Paragraph>
                  <Paragraph $after={29}>
                    <Line $covered>{" , but can be a good guide to understanding. Your willingness to"}</Line>
                    <Line>understand a new culture and to adjust to the cultural differences will greatly contribute to your smooth</Line>
                    <Line>and sufficient adaptation to <Misspelt>MVCC</Misspelt> and the <Misspelt>U.S.</Misspelt></Line>
                  </Paragraph>
                  <Heading $after={16}>Making Conversation</Heading>
                  <Paragraph>
                    <Line><b>"Small talk"</b> includes topics, such as sports, weather, jobs, or past experiences. Most people do not talk</Line>
                    <Line>about religion, politics, or feelings with strangers. Sex and bodily functions are not discussed. People ask</Line>
                  </Paragraph>
                </Frame>
              </Page>
              <ScrollColumn><ScrollThumb $w="2px" $h="157px" /></ScrollColumn>
            </EditorRow>
            <SheetBar>
              <HScroll><ScrollThumb $w="473px" $h="2px" /></HScroll>
              <Sheets>
                <SheetNav aria-label="First"><svg width="8" height="14" fill="#fff"><path d="M0 0h1v14H0zM8 1v12L2 7z" /></svg></SheetNav>
                <SheetNav aria-label="Previous"><svg width="7" height="12" fill="#fff"><path d="M7 0v12L0 6z" /></svg></SheetNav>
                <SheetNav aria-label="Next"><svg width="7" height="12" fill="#fff"><path d="M0 0v12l7-6z" /></svg></SheetNav>
                <SheetNav aria-label="Last"><svg width="9" height="14" fill="#fff"><path d="M8 0h1v14H8zM0 1v12l6-6z" /></svg></SheetNav>
                <CrumbGap $w={9} />
                <Sheet $active $w={62}>Layout</Sheet>
                <Sheet $rule $w={69}>Controls</Sheet>
                <Sheet $rule $w={112}>Dimension Lines</Sheet>
              </Sheets>
            </SheetBar>
          </Editor>
          <SideBar>
            <GlyphButton $w={22} $h={16} aria-label="Settings"><svg width="10" height="8" stroke="#eee"><path d="M0 .5h10M0 3.500h10M0 6.500h10" /></svg></GlyphButton>
            <GlyphButton $w={22} $h={22} aria-label="Properties">
              <svg width="20" height="20" viewBox="0 0 20 20" fill="none" stroke="#eee" strokeWidth="1.300"><rect x=".7" y=".7" width="18.600" height="18.600" /><path d="M1 2.500h18" stroke="#888" strokeWidth="3" /><path d="M4 10h12M4 14h12" /><path d="M10 8.500h3v3h-3zM7 12.500h3v3H7z" fill="#3a9ad9" stroke="none" /></svg>
            </GlyphButton>
            <GlyphButton $w={22} $h={22} aria-label="Styles">
              <svg width="21" height="22" viewBox="0 0 21 22" fill="none" stroke="#eee" strokeWidth="1.600"><path d="M1 17L7 1.500 12 14M3 11.500h7" /><path d="M20 7l-7 9 2 2 6-9z" strokeWidth="1.100" /><path d="M12 16l3 2c0 3-4 4-8 3 3-1 2-4 5-5z" fill="#3a8fce" stroke="#8cc4ee" strokeWidth=".8" /></svg>
            </GlyphButton>
            <GlyphButton $w={22} $h={22} aria-label="Gallery">
              <svg width="22" height="20" viewBox="0 0 22 20"><path d="M1 17V1h6l2 3h10v3H5L2 17z" fill="#3b2a18" stroke="#f0c98a" strokeWidth="1.300" /><path d="M4 7h17v4H9v7H1z" fill="#e8843a" /><rect x="9" y="8" width="12" height="11.500" fill="#191919" stroke="#eee" strokeWidth="1.300" /><path d="M10 18.500l4-5 2 2 2-2 2.500 5z" fill="#3a8fce" /><circle cx="12.500" cy="11" r="1.200" fill="#f0c98a" /></svg>
            </GlyphButton>
            <GlyphButton $w={22} $h={22} aria-label="Navigator">
              <svg width="20" height="20" viewBox="0 0 20 20"><circle cx="10" cy="10" r="9.200" fill="none" stroke="#e8e8e8" strokeWidth="1.300" /><path d="M14.500 5L12 12l-6.500 3L8 8z" fill="#2e86c4" /><circle cx="10" cy="10" r="1.500" fill="#191919" /></svg>
            </GlyphButton>
            <GlyphButton $w={22} $h={22} aria-label="Shapes"><ShapesIcon s={21} /></GlyphButton>
            <SideHandle aria-label="Hide sidebar"><svg width="5" height="8"><path d="M0 0v8l5-4z" fill="#222" /></svg></SideHandle>
          </SideBar>
        </Workspace>

        <StatusBar>
          <StatusCell $w={120} $pad={11} $rule>Page 1 of 8</StatusCell>
          <StatusCell $w={558} $rule />
          <StatusCell $w={425} $pad={8} $rule>master-page3</StatusCell>
          <StatusCell $w={270} $pad={10}>
            <svg width="17" height="12" viewBox="0 0 17 12" fill="none"><path d="M5.500 6.500v4h11v-8h-8" stroke="#eee" /><path d="M0 4h7M3.500 0v8" stroke="#3a9ad9" /></svg>
            -1.20 / -0.45
          </StatusCell>
          <StatusCell $grow="1">
            <svg width="16" height="13" viewBox="0 0 16 13" fill="none"><rect x="5.500" y="6.500" width="10" height="5" stroke="#eee" /><path d="M5 3.500h11M5.500 1v5M15.500 1v5M0 5.500h4M0 11.500h4M2 5v7" stroke="#3a9ad9" /></svg>
            0.00 x 0.00
          </StatusCell>
          <StatusCell $w={1} $rule />
          <StatusCell $w={29} $pad={9} $rule>1:1</StatusCell>
          <StatusCell $w={23} $pad={3} $rule>
            <svg width="16" height="16" viewBox="0 0 16 16" fill="none" stroke="#e0789c" strokeWidth="1.200"><path d="M.6.6h14.800v14.800H.6zM3.500.6v5.500h9V.6M4.500 15.400V9.500h7v5.900M6.500 11v3" /></svg>
          </StatusCell>
          <StatusCell $w={30} $rule />
          <StatusCell $w={22} $pad={4} $rule>
            <svg width="13" height="13" viewBox="0 0 13 13" fill="none" stroke="#3a9ad9" strokeWidth="1.100"><path d="M6.500 1v11M1 6.500h11M4.500 2.500l2-2 2 2M4.500 10.500l2 2 2-2M2.500 4.500l-2 2 2 2M10.500 4.500l2 2-2 2" /></svg>
          </StatusCell>
          <StatusCell $w={144} $pad={9} $rule>
            <svg width="128" height="11" viewBox="0 0 128 11" fill="none" stroke="#fff">
              <path d="M0 5.500h10M118 5.500h10M123.500 1v9" strokeWidth="1.600" />
              <path d="M15 5.500h98" strokeWidth="1.500" /><path d="M52.500 3v5" strokeWidth="1.500" /><rect x="63.500" y=".5" width="3" height="10" fill="#777" />
            </svg>
          </StatusCell>
          <StatusCell $w={40} $pad={5}>220%</StatusCell>
        </StatusBar>

        <TaskBar>
          <Task aria-label="Start">
            <Icon24><path d="M0 0h11.500v11.500H0zM12.500 0H24v11.500H12.500zM0 12.500h11.500V24H0zM12.500 12.500H24V24H12.500z" fill="#4cc2f6" /></Icon24>
          </Task>
          <TaskSearch>
            <svg width="15" height="15" viewBox="0 0 15 15" fill="none" stroke="#ddd" strokeWidth="1.500"><circle cx="6" cy="6" r="5.200" /><path d="M10 10l4.500 4.500" /></svg>
            Search
            <CopilotPill><CopilotArt s={18} /></CopilotPill>
          </TaskSearch>
          {tasks.map((t) => (
            <Task key={t.name} aria-label={t.name} $open={t.open} $active={t.active}>{t.art}</Task>
          ))}
          <Tray>
            <TrayItem $w={32}><Chevron dir="up" s={10} w={1.6} c="#eee" /></TrayItem>
            <TrayItem $w={32}><svg width="16" height="16" viewBox="0 0 16 16"><path d="M5 .7h6L15.300 5v6L11 15.300H5L.7 11V5z" fill="#17931c" stroke="#cfeccf" strokeWidth="1.200" /><text x="8" y="11.500" fontSize="10" fontWeight="700" fill="#fff" textAnchor="middle">T</text></svg></TrayItem>
            <TrayItem $w={32}><svg width="12" height="16" viewBox="0 0 12 16" fill="none" stroke="#8fd0e4" strokeWidth="1.200"><rect x="3.800" y=".6" width="4.400" height="9" rx="2.200" fill="#3f6f7c" /><path d="M1 7c0 6.500 10 6.500 10 0M6 12v3.500" /></svg></TrayItem>
            <TrayItem $w={46}>ENG</TrayItem>
            <TrayItem $w={28}>
              <svg width="16" height="12" viewBox="0 0 16 12" fill="none" stroke="#eee" strokeWidth="1.300"><path d="M1 4.500c4-4.500 10-4.500 14 0M3.300 7c3-3 6.400-3 9.400 0M5.700 9.300c1.500-1.300 3-1.300 4.600 0" /><circle cx="8" cy="11" r="1.200" fill="#eee" stroke="none" /></svg>
            </TrayItem>
            <TrayItem $w={22}>
              <svg width="16" height="13" viewBox="0 0 16 13" fill="none" stroke="#eee" strokeWidth="1.200"><path d="M.6 4.500H3l3.500-3.500v11L3 8.500H.6z" /><path d="M9 4c1.300 1.500 1.300 3.500 0 5" /><path d="M11 2.500c2.500 2.500 2.500 5.500 0 8M13 1c3.300 3.300 3.300 8 0 11" stroke="#666" /></svg>
            </TrayItem>
            <TrayItem $w={26}>
              <svg width="17" height="13" viewBox="0 0 17 13" fill="none" stroke="#eee" strokeWidth="1.300"><path d="M5.500 2.600H14v9.700H1V8" /><path d="M14.500 5.500h1.800v4h-1.800" /><rect x="6" y="5" width="2" height="5.500" fill="#eee" stroke="none" /><path d="M3.500 0L.5 5h3L2 8.500 5.500 3.500h-3z" fill="#eee" stroke="none" /></svg>
            </TrayItem>
            <Clock>12:09 AM<br />11-Feb-24</Clock>
            <svg width="18" height="16" viewBox="0 0 18 16" fill="none" stroke="#eee" strokeWidth="1.200"><path d="M9 1C5.500 1 3.500 3 3.500 6v3.500L1.500 12.500H13v-3M5.500 13c.5 2.500 3.500 2.500 4 0" /><path d="M7.500 5h3.500L7.500 9H11M12.500.600h4L12.500 5h4" /></svg>
          </Tray>
        </TaskBar>

        <SaveDialog />
        <Pointer>
          <svg width="24" height="40" viewBox="0 0 26 42"><path d="M1 1v32l7-6 6 12 5-2.500-6-12h11z" fill="#fff" stroke="#111" strokeWidth="1.500" /></svg>
        </Pointer>
      </Desktop>
    </>
  );
}
